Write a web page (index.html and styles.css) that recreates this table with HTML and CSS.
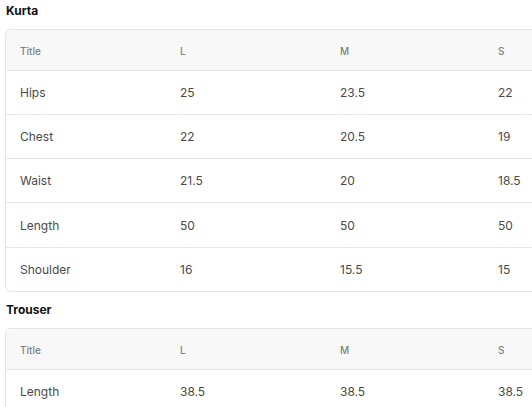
FILE: index.html
```html
<!DOCTYPE html>
<html>
<head>
<meta charset="utf-8">
<link rel="stylesheet" href="styles.css">
</head>
<body>
<div class="page">
  <section class="chart">
    <h3 class="chart-title">Kurta</h3>
    <div class="table-wrap">
      <table class="size-table">
        <colgroup><col class="c1"><col class="c2"><col class="c3"><col class="c4"></colgroup>
        <thead>
          <tr><th>Title</th><th>L</th><th>M</th><th>S</th></tr>
        </thead>
        <tbody>
          <tr><td>Hips</td><td>25</td><td>23.5</td><td>22</td></tr>
          <tr><td>Chest</td><td>22</td><td>20.5</td><td>19</td></tr>
          <tr><td>Waist</td><td>21.5</td><td>20</td><td>18.5</td></tr>
          <tr><td>Length</td><td>50</td><td>50</td><td>50</td></tr>
          <tr><td>Shoulder</td><td>16</td><td>15.5</td><td>15</td></tr>
        </tbody>
      </table>
    </div>
  </section>
  <section class="chart">
    <h3 class="chart-title">Trouser</h3>
    <div class="table-wrap">
      <table class="size-table">
        <colgroup><col class="c1"><col class="c2"><col class="c3"><col class="c4"></colgroup>
        <thead>
          <tr><th>Title</th><th>L</th><th>M</th><th>S</th></tr>
        </thead>
        <tbody>
          <tr><td>Length</td><td>38.5</td><td>38.5</td><td>38.5</td></tr>
        </tbody>
      </table>
    </div>
  </section>
</div>
</body>
</html>
```
FILE: styles.css
```css
html, body {
  margin: 0;
  padding: 0;
  background: #fff;
  overflow: hidden;
}
body {
  font-family: Inter, "Noto Sans", sans-serif;
  color: #444;
}
.page {
  padding: 0 0 0 5px;
  width: 660px;
}
.chart-title {
  margin: 0;
  padding: 4px 0 0 1px;
  height: 25px;
  font-size: 12px;
  font-weight: 700;
  color: #111;
  line-height: 14px;
}
.table-wrap {
  border: 1px solid #e4e4e4;
  border-radius: 6px;
  overflow: hidden;
  width: 620px;
  margin-bottom: 7px;
}
.size-table {
  border-collapse: collapse;
  width: 620px;
  table-layout: fixed;
}
.c1, .c2, .c3 { width: 160px; }
.c4 { width: 140px; }
.size-table th,
.size-table td {
  text-align: left;
  padding: 0 0 0 14px;
  box-sizing: border-box;
}
.size-table th {
  background: #f8f8f8;
  font-size: 10px;
  font-weight: 500;
  color: #808080;
  height: 40px;
  padding-top: 2px;
  border-bottom: 1px solid #e4e4e4;
}
.size-table td {
  font-size: 12px;
  color: #4a4a4a;
  height: 44.3px;
  border-top: 1px solid #e6e6e6;
}
.size-table tbody tr:first-child td {
  border-top: none;
}
.size-table td:last-child,
.size-table th:last-child {
  padding-left: 12px;
}
```
